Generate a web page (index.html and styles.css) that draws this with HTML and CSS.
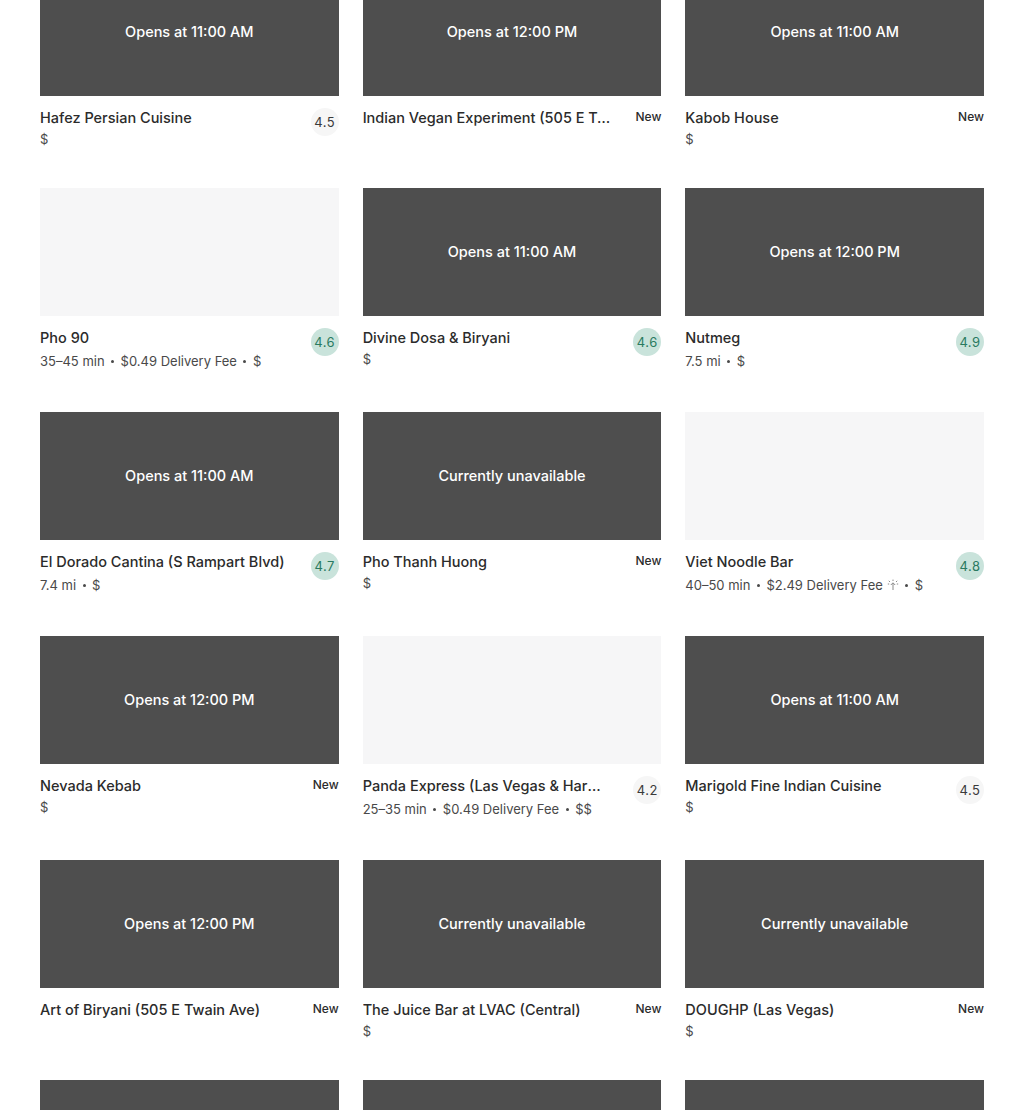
FILE: index.html
```html
<!DOCTYPE html>
<html lang="en">
<head>
    <meta charset="UTF-8">
    <meta name="viewport" content="width=device-width, initial-scale=1.0">
    <title>Restaurants</title>
    <link rel="stylesheet" href="styles.css">
</head>
<body>
    <div class="store-grid">
        <div class="store">
            <div class="store-image closed">Opens at 11:00 AM</div>
            <div class="store-info">
                <div class="store-text">
                    <div class="store-name">Hafez Persian Cuisine</div>
                    <div class="store-meta"><span>$</span></div>
                </div>
                <div class="rating">4.5</div>
            </div>
        </div>
        <div class="store">
            <div class="store-image closed">Opens at 12:00 PM</div>
            <div class="store-info">
                <div class="store-text">
                    <div class="store-name">Indian Vegan Experiment (505 E Twain Ave)</div>
                </div>
                <div class="new-label">New</div>
            </div>
        </div>
        <div class="store">
            <div class="store-image closed">Opens at 11:00 AM</div>
            <div class="store-info">
                <div class="store-text">
                    <div class="store-name">Kabob House</div>
                    <div class="store-meta"><span>$</span></div>
                </div>
                <div class="new-label">New</div>
            </div>
        </div>

        <div class="store">
            <div class="store-image"></div>
            <div class="store-info">
                <div class="store-text">
                    <div class="store-name">Pho 90</div>
                    <div class="store-meta dotted"><span>35–45 min</span><i></i><span>$0.49 Delivery Fee</span><i></i><span>$</span></div>
                </div>
                <div class="rating high">4.6</div>
            </div>
        </div>
        <div class="store">
            <div class="store-image closed">Opens at 11:00 AM</div>
            <div class="store-info">
                <div class="store-text">
                    <div class="store-name">Divine Dosa &amp; Biryani</div>
                    <div class="store-meta"><span>$</span></div>
                </div>
                <div class="rating high">4.6</div>
            </div>
        </div>
        <div class="store">
            <div class="store-image closed">Opens at 12:00 PM</div>
            <div class="store-info">
                <div class="store-text">
                    <div class="store-name">Nutmeg</div>
                    <div class="store-meta dotted"><span>7.5 mi</span><i></i><span>$</span></div>
                </div>
                <div class="rating high">4.9</div>
            </div>
        </div>

        <div class="store">
            <div class="store-image closed">Opens at 11:00 AM</div>
            <div class="store-info">
                <div class="store-text">
                    <div class="store-name">El Dorado Cantina (S Rampart Blvd)</div>
                    <div class="store-meta dotted"><span>7.4 mi</span><i></i><span>$</span></div>
                </div>
                <div class="rating high">4.7</div>
            </div>
        </div>
        <div class="store">
            <div class="store-image closed">Currently unavailable</div>
            <div class="store-info">
                <div class="store-text">
                    <div class="store-name">Pho Thanh Huong</div>
                    <div class="store-meta"><span>$</span></div>
                </div>
                <div class="new-label">New</div>
            </div>
        </div>
        <div class="store">
            <div class="store-image"></div>
            <div class="store-info">
                <div class="store-text">
                    <div class="store-name">Viet Noodle Bar</div>
                    <div class="store-meta dotted">
                        <span>40–50 min</span><i></i><span>$2.49 Delivery Fee</span>
                        <svg class="fee-icon" viewBox="0 0 12 12" fill="none" stroke="#8a8a8a" stroke-width="1">
                            <path d="M6 11V4M3.8 6 6 3.8 8.200 6M6 .6v1.400M1.800 1.800l1.200 1.200M10.200 1.800 9 3M.8 5h1.400M9.800 5h1.400"/>
                        </svg>
                        <i></i><span>$</span>
                    </div>
                </div>
                <div class="rating high">4.8</div>
            </div>
        </div>

        <div class="store">
            <div class="store-image closed">Opens at 12:00 PM</div>
            <div class="store-info">
                <div class="store-text">
                    <div class="store-name">Nevada Kebab</div>
                    <div class="store-meta"><span>$</span></div>
                </div>
                <div class="new-label">New</div>
            </div>
        </div>
        <div class="store">
            <div class="store-image"></div>
            <div class="store-info">
                <div class="store-text">
                    <div class="store-name">Panda Express (Las Vegas &amp; Harmon Ave)</div>
                    <div class="store-meta dotted"><span>25–35 min</span><i></i><span>$0.49 Delivery Fee</span><i></i><span>$$</span></div>
                </div>
                <div class="rating">4.2</div>
            </div>
        </div>
        <div class="store">
            <div class="store-image closed">Opens at 11:00 AM</div>
            <div class="store-info">
                <div class="store-text">
                    <div class="store-name">Marigold Fine Indian Cuisine</div>
                    <div class="store-meta"><span>$</span></div>
                </div>
                <div class="rating">4.5</div>
            </div>
        </div>

        <div class="store">
            <div class="store-image closed">Opens at 12:00 PM</div>
            <div class="store-info">
                <div class="store-text">
                    <div class="store-name">Art of Biryani (505 E Twain Ave)</div>
                </div>
                <div class="new-label">New</div>
            </div>
        </div>
        <div class="store">
            <div class="store-image closed">Currently unavailable</div>
            <div class="store-info">
                <div class="store-text">
                    <div class="store-name">The Juice Bar at LVAC (Central)</div>
                    <div class="store-meta"><span>$</span></div>
                </div>
                <div class="new-label">New</div>
            </div>
        </div>
        <div class="store">
            <div class="store-image closed">Currently unavailable</div>
            <div class="store-info">
                <div class="store-text">
                    <div class="store-name">DOUGHP (Las Vegas)</div>
                    <div class="store-meta"><span>$</span></div>
                </div>
                <div class="new-label">New</div>
            </div>
        </div>

        <div class="store"><div class="store-image closed"></div></div>
        <div class="store"><div class="store-image closed"></div></div>
        <div class="store"><div class="store-image closed"></div></div>
    </div>
</body>
</html>
```

FILE: styles.css
```css
* {
    box-sizing: border-box;
    margin: 0;
    padding: 0;
}

html {
    height: 1110px;
    overflow: hidden;
}

body {
    background-color: white;
    color: #191919;
    font-family: 'Inter', 'Liberation Sans', sans-serif;
}

.store-grid {
    display: grid;
    grid-template-columns: repeat(3, 1fr);
    column-gap: 24px;
    row-gap: 39px;
    margin: -32px 40px 0;
}

.store {
    min-width: 0;
}

.store-image {
    height: 128px;
    display: flex;
    align-items: center;
    justify-content: center;
    padding-bottom: 2px;
    background-color: #f6f6f7;
    font-size: 14.5px;
    font-weight: 500;
    color: white;
}

.store-image.closed {
    background-color: #4e4e4e;
}

.store-info {
    display: flex;
    justify-content: space-between;
    align-items: flex-start;
    gap: 23px;
    padding-top: 12px;
    min-height: 53px;
}

.store-text {
    flex: 1;
    min-width: 0;
}

.store-name {
    font-size: 14.5px;
    font-weight: 500;
    line-height: 20px;
    color: #2b2b2b;
    overflow: hidden;
    white-space: nowrap;
    text-overflow: ellipsis;
}

.store-meta {
    display: flex;
    align-items: center;
    margin-top: 1px;
    font-size: 13px;
    line-height: 20px;
    color: #494949;
}

.store-meta.dotted {
    margin-top: 3px;
    padding-bottom: 2px;
}

.store-meta i {
    width: 3px;
    height: 3px;
    margin: 0 6.5px;
    border-radius: 50%;
    background-color: #494949;
}

.fee-icon {
    width: 12px;
    height: 12px;
    margin-left: 4px;
}

.rating {
    flex: none;
    width: 28px;
    height: 28px;
    display: flex;
    align-items: center;
    justify-content: center;
    border-radius: 50%;
    background-color: #f6f6f6;
    font-size: 13px;
    letter-spacing: 0.5px;
    color: #3a3a3a;
}

.rating.high {
    background-color: #c9e3db;
    color: #2a7a60;
}

.new-label {
    flex: none;
    font-size: 12px;
    font-weight: 500;
    line-height: 17px;
    color: #2b2b2b;
}
```
